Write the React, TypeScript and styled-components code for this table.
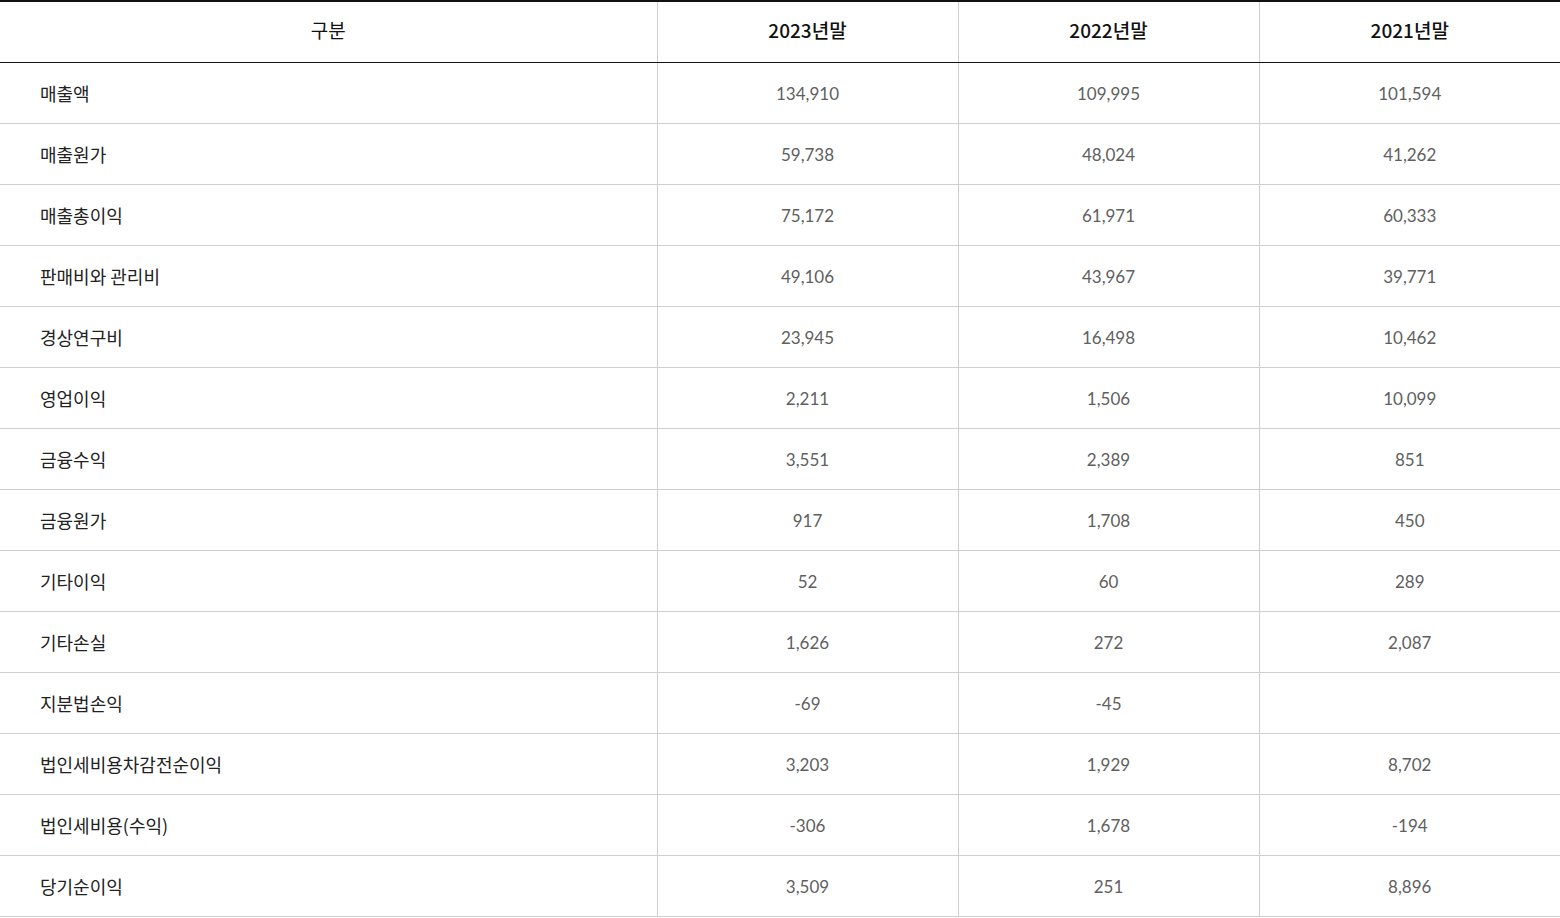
import React from "react";
import styled, { createGlobalStyle } from "styled-components";

const Global = createGlobalStyle`
  html, body { margin: 0; padding: 0; background: #fff; }
  body { font-family: "Noto Sans CJK KR", "Noto Sans", sans-serif; }
`;

const Table = styled.table`
  width: 1560px;
  border-collapse: collapse;
  table-layout: fixed;
  border-top: 2px solid #111;
`;

const HeadCell = styled.th<{ $first?: boolean }>`
  height: 56px;
  padding: 0 0 4px 0;
  font-family: "Noto Sans CJK KR", sans-serif;
  font-size: 19px;
  line-height: 24px;
  font-weight: ${(p) => (p.$first ? 400 : 500)};
  color: #111;
  text-align: center;
  vertical-align: middle;
  border-bottom: 1px solid #111;
  border-left: 1px solid #cfcfcf;
  &:first-child { border-left: none; }
`;

const Row = styled.tr`
  border-bottom: 1px solid #cfcfcf;
`;

const Label = styled.td`
  height: 59px;
  padding: 0 0 1px 40px;
  font-family: "Noto Sans CJK KR", sans-serif;
  font-size: 18px;
  line-height: 24px;
  font-weight: 400;
  color: #222;
  text-align: left;
  vertical-align: middle;
`;

const Num = styled.td`
  height: 59px;
  padding: 1px 0 0 0;
  font-family: Lato, "Noto Sans CJK KR", sans-serif;
  font-size: 17px;
  line-height: 24px;
  font-weight: 400;
  color: #606060;
  text-align: center;
  vertical-align: middle;
  border-left: 1px solid #cfcfcf;
`;

const rows: [string, string, string, string][] = [
  ["매출액", "134,910", "109,995", "101,594"],
  ["매출원가", "59,738", "48,024", "41,262"],
  ["매출총이익", "75,172", "61,971", "60,333"],
  ["판매비와 관리비", "49,106", "43,967", "39,771"],
  ["경상연구비", "23,945", "16,498", "10,462"],
  ["영업이익", "2,211", "1,506", "10,099"],
  ["금융수익", "3,551", "2,389", "851"],
  ["금융원가", "917", "1,708", "450"],
  ["기타이익", "52", "60", "289"],
  ["기타손실", "1,626", "272", "2,087"],
  ["지분법손익", "-69", "-45", ""],
  ["법인세비용차감전순이익", "3,203", "1,929", "8,702"],
  ["법인세비용(수익)", "-306", "1,678", "-194"],
  ["당기순이익", "3,509", "251", "8,896"],
];

export default function App() {
  return (
    <>
      <Global />
      <Table>
        <colgroup>
          <col style={{ width: 657 }} />
          <col style={{ width: 301 }} />
          <col style={{ width: 301 }} />
          <col style={{ width: 301 }} />
        </colgroup>
        <thead>
          <tr>
            <HeadCell $first>구분</HeadCell>
            <HeadCell>2023년말</HeadCell>
            <HeadCell>2022년말</HeadCell>
            <HeadCell>2021년말</HeadCell>
          </tr>
        </thead>
        <tbody>
          {rows.map((r) => (
            <Row key={r[0]}>
              <Label>{r[0]}</Label>
              <Num>{r[1]}</Num>
              <Num>{r[2]}</Num>
              <Num>{r[3]}</Num>
            </Row>
          ))}
        </tbody>
      </Table>
    </>
  );
}
